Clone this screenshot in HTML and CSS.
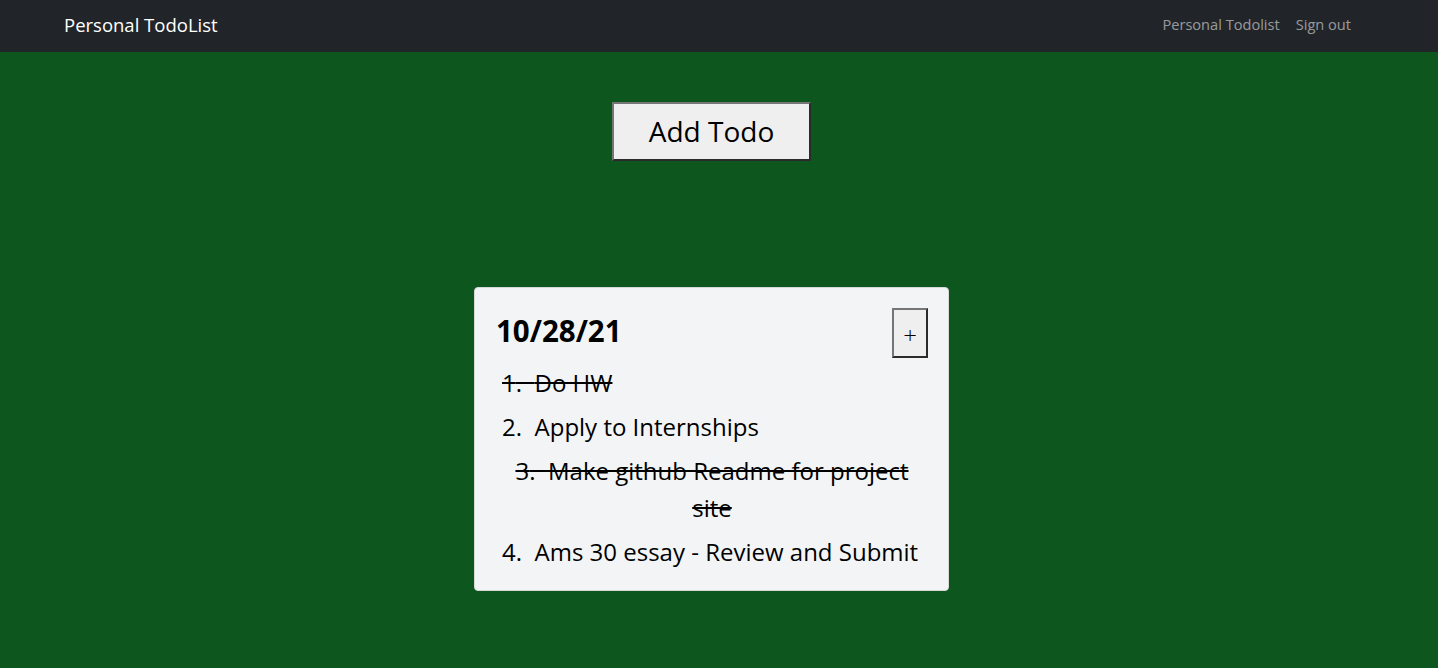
FILE: index.html
```html
<!DOCTYPE html>
<html>
<head>
<meta charset="utf-8">
<link rel="stylesheet" href="styles.css">
</head>
<body>
<nav class="navbar">
  <a class="brand">Personal TodoList</a>
  <div class="nav-links">
    <a class="nav-link">Personal Todolist</a>
    <a class="nav-link">Sign out</a>
  </div>
</nav>
<main class="main">
  <button class="add-btn">Add Todo</button>
  <section class="card">
    <div class="card-head">
      <h2 class="card-title">10/28/21</h2>
      <button class="plus-btn">+</button>
    </div>
    <ol class="todo-list">
      <li class="todo done">Do HW</li>
      <li class="todo">Apply to Internships</li>
      <li class="todo done center">Make github Readme for project site</li>
      <li class="todo">Ams 30 essay - Review and Submit</li>
    </ol>
  </section>
</main>
</body>
</html>
```

FILE: styles.css
```css
* { box-sizing: border-box; }
html, body { margin: 0; height: 100%; }
body {
  font-family: "Open Sans", "Noto Sans", sans-serif;
  background: #0d561e;
  color: #000;
}
.navbar {
  height: 52px;
  background: #212529;
  display: flex;
  align-items: center;
  justify-content: space-between;
  padding: 0 87px 4px 64px;
}
.brand {
  color: #fff;
  font-size: 18.5px;
}
.nav-links { display: flex; gap: 16px; }
.nav-link {
  color: rgba(255,255,255,.55);
  font-size: 14.6px;
}
.main {
  display: flex;
  flex-direction: column;
  align-items: center;
  padding: 50px 15px 0 0;
}
.add-btn {
  width: 199px;
  height: 59px;
  font-family: inherit;
  font-size: 28px;
  background: #efefef;
  border: 2px solid;
  border-color: #767676 #2b2b2b #2b2b2b #767676;
  color: #000;
  padding: 0 0 2px 0;
}
.card {
  margin-top: 126px;
  width: 475px;
  background: #f3f4f6;
  border: 1px solid #d8d8d8;
  border-radius: 4px;
  padding: 20px 20px 20px 21px;
}
.card-head {
  display: flex;
  justify-content: space-between;
  align-items: flex-start;
}
.card-title {
  margin: 8px 0 0 0;
  font-size: 29.5px;
  font-weight: 700;
  line-height: 1;
}
.plus-btn {
  width: 36px;
  height: 50px;
  font-family: inherit;
  font-size: 24px;
  font-weight: 300;
  background: #efefef;
  border: 2px solid;
  border-color: #767676 #2b2b2b #2b2b2b #767676;
  color: #000;
  padding: 2px 0 0 0;
}
.todo-list {
  list-style: none;
  counter-reset: item;
  margin: 6px 0 0 0;
  padding: 0 0 0 6px;
}
.todo {
  counter-increment: item;
  font-size: 24px;
  line-height: 37px;
  margin-bottom: 7px;
}
.todo::before {
  content: counter(item) ".\00a0\00a0";
}
.todo:last-child { margin-bottom: 0; }
.done { text-decoration: line-through; }
.center { text-align: center; padding-right: 6px; }
```
